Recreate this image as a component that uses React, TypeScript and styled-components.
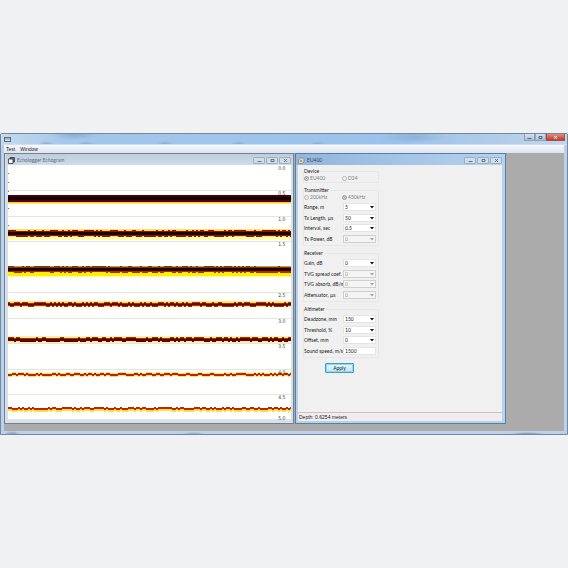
import React, { useId, useState } from 'react';
import styled, { createGlobalStyle, css } from 'styled-components';

const GlobalStyle = createGlobalStyle`
  * { box-sizing: border-box; }
  body { margin: 0; background: #eff1f2; }
  button, input, select { font: inherit; color: inherit; margin: 0; }
`;

const Page = styled.div`
  min-height: 100vh;
  display: flex;
  flex-direction: column;
  justify-content: center;
  font-family: Lato, 'Liberation Sans', Arial, sans-serif;
  font-size: 5px;
  line-height: 8px;
  color: #222;
`;

const AppWindow = styled.main`
  display: flex;
  flex-direction: column;
  border: 1px solid #75889a;
  border-radius: 2px 2px 0 0;
  padding: 0 3px 3px;
  background:
    radial-gradient(ellipse 8px 3px at 2% 100%, #7f9cb8 0, transparent 100%),
    radial-gradient(ellipse 12px 2px at 34% 100%, #8ba6c0 0, transparent 100%),
    radial-gradient(ellipse 18px 2px at 93% 100%, #7c94aa 0, transparent 100%),
    linear-gradient(#b9d1ea, #b9d1ea);
`;

const TitleBar = styled.header`
  display: flex;
  align-items: flex-start;
  justify-content: space-between;
  height: 11px;
  margin: 0 -3px;
  padding-left: 3px;
  border-bottom: 1px solid #cfdeee;
  background:
    radial-gradient(ellipse 24px 5px at 13% 10%, #8baed3 0, transparent 100%),
    radial-gradient(ellipse 8px 3px at 8% 100%, #8baacb 0, transparent 100%),
    radial-gradient(ellipse 8px 3px at 15% 100%, #8baacb 0, transparent 100%),
    radial-gradient(ellipse 8px 3px at 29% 100%, #8baacb 0, transparent 100%),
    radial-gradient(ellipse 8px 3px at 42% 100%, #8baacb 0, transparent 100%),
    radial-gradient(ellipse 8px 3px at 56% 100%, #8baacb 0, transparent 100%),
    radial-gradient(ellipse 34px 6px at 73% 30%, #8db1d8 0, transparent 100%),
    linear-gradient(90deg, #c5daef 0, #a3c6ea 12%, #9cc2eb 70%, #b4cee9 90%, #c2d6ea 100%);
`;

const AppIcon = styled.svg`
  width: 7px;
  height: 6px;
  margin-top: 2px;
`;

const Buttons = styled.div`
  display: flex;
  padding-right: 2px;
`;

const CaptionButton = styled.button<{ $close?: boolean }>`
  display: grid;
  place-items: center;
  width: ${p => (p.$close ? 19 : 11)}px;
  height: 7px;
  padding: 0;
  border: 1px solid ${p => (p.$close ? '#a45050' : '#8da3ba')};
  border-top: 0;
  color: ${p => (p.$close ? '#fff' : '#56687b')};
  background: ${p => (p.$close ? 'linear-gradient(#df9080, #c43a28)' : 'linear-gradient(#d6e2ee, #a9bdd2)')};
`;

const Glyph = styled.svg`
  width: 5px;
  height: 5px;
  fill: none;
  stroke: currentColor;
  stroke-width: 1;
`;

const MenuBar = styled.nav`
  display: flex;
  gap: 5px;
  height: 8px;
  padding-left: 2px;
  font-family: 'Liberation Sans', Arial, sans-serif;
  background: linear-gradient(#f7f9fd, #dde4f1);
`;

const MenuItem = styled.button`
  padding: 0;
  border: 0;
  background: none;
  line-height: 8px;
`;

const Workspace = styled.div`
  display: grid;
  grid-template-columns: 290fr 211fr 57fr;
  column-gap: 1px;
  align-items: stretch;
  padding-bottom: 7px;
  background: #ababab;
`;

const Child = styled.section<{ $active?: boolean }>`
  display: flex;
  flex-direction: column;
  min-width: 0;
  border: 1px solid ${p => (p.$active ? '#56809f' : '#77818d')};
  padding: ${p => (p.$active ? '0 3px 2px 2px' : '0 2px 3px 3px')};
  background: ${p => (p.$active ? '#b6d2ee' : '#d5e0ee')};
`;

const ChildTitle = styled.header<{ $active?: boolean }>`
  display: flex;
  align-items: center;
  gap: 2px;
  height: 11px;
  flex: none;
  margin: 0 -2px;
  padding: 1px 2px 0 2px;
  color: ${p => (p.$active ? '#344a60' : '#5d6a78')};
  background: ${p =>
    p.$active
      ? 'linear-gradient(90deg, #93b5dc, #a4c4e6 50%, #b5d1ed)'
      : 'linear-gradient(#bccddd, #cfdcea)'};
`;

const ChildName = styled.h2`
  flex: 1;
  margin: 0;
  font-size: 5px;
  font-weight: 400;
`;

const ChildIcon = styled.svg`
  width: 7px;
  height: 7px;
`;

const ChildButtons = styled.div`
  display: flex;
  gap: 1px;
`;

const ChildButton = styled.button`
  display: grid;
  place-items: center;
  width: 12px;
  height: 7px;
  padding: 0;
  border: 1px solid #9eafc1;
  border-radius: 1px;
  color: #61758a;
  background: #d0deec;
`;

const Chart = styled.svg`
  display: block;
  width: 100%;
  height: 255px;
  background: #fffffe;
`;

const AxisText = styled.text`
  font-family: 'DejaVu Sans Condensed', 'DejaVu Sans', sans-serif;
  font-size: 5px;
  fill: #444;
  text-anchor: end;
`;

const Panel = styled.form`
  flex: 1;
  display: flex;
  flex-direction: column;
  background: #f0f0f0;
`;

const Groups = styled.div`
  flex: 1;
  display: flex;
  flex-direction: column;
  gap: 3px;
  padding: 2px 0 0 5px;
`;

const Group = styled.fieldset`
  margin: 0;
  padding: 0;
  min-width: 0;
  width: 76px;
  border: 1px solid #e7e7e7;
`;

const Legend = styled.legend`
  margin: 0;
  padding: 0 1px 0 0;
  height: 8px;
  background: #f0f0f0;
`;

const Radios = styled.div`
  display: grid;
  grid-template-columns: 1fr 1fr;
  column-gap: 2px;
  height: 7px;
  line-height: 7px;
`;

const RadioLabel = styled.label`
  display: flex;
  align-items: center;
  gap: 1px;
  color: #808080;
`;

const Radio = styled.input`
  appearance: none;
  width: 5px;
  height: 5px;
  border: 1px solid #b9b9b9;
  border-radius: 50%;
  background: #f4f4f4;
  &:checked {
    border-color: #a5a5a5;
    background: #8d8d8d;
    box-shadow: inset 0 0 0 1px #d8d8d8;
  }
`;

const Rows = styled.div`
  display: grid;
  grid-auto-rows: 1fr;
  height: 44px;
  padding: 1px 0;
`;

const Row = styled.div`
  display: grid;
  grid-template-columns: minmax(0, 1fr) 33px;
  align-items: center;
  padding-right: 2px;
`;

const RowLabel = styled.label`
  white-space: nowrap;
`;

const Field = styled.div`
  position: relative;
  height: 8px;
`;

const control = css`
  display: block;
  width: 100%;
  height: 8px;
  padding: 0 1px;
  border: 1px solid #e4e4e4;
  border-radius: 0;
  background: #fff;
  line-height: 6px;
  outline: 0;
  &:disabled {
    opacity: 1;
    color: #999;
    border-color: #cfcfcf;
    background: #f4f4f4;
  }
`;

const Select = styled.select`
  ${control}
  appearance: none;
`;

const TextInput = styled.input`
  ${control}
`;

const Arrow = styled.svg<{ $dim?: boolean }>`
  position: absolute;
  right: 2px;
  top: 3px;
  width: 4px;
  height: 3px;
  fill: ${p => (p.$dim ? '#a0a0a0' : '#111')};
  pointer-events: none;
`;

const Apply = styled.button`
  align-self: flex-start;
  width: 29px;
  height: 10px;
  margin: 2px 0 0 22px;
  padding: 0;
  border: 1px solid #3f9fc4;
  border-radius: 1px;
  box-shadow: inset 0 0 0 1px #8adcf6;
  background: linear-gradient(#eaf6fb, #c4e3f0);
  line-height: 8px;
`;

const Status = styled.footer`
  height: 9px;
  flex: none;
  padding-left: 1px;
  border-top: 1px solid #c3c3c3;
  background: #f1eded;
  font-family: 'Liberation Sans', Arial, sans-serif;
`;

/* ---- echogram ---- */

const WIDTH = 283;
const STEP = 2;

// Repeatable ping-to-ping wobble, either 0 or 1.
const wobble = (i: number, seed: number) => {
  const v = Math.sin(i * 12.9898 + seed * 78.233) * 43758.5453;
  return v - Math.floor(v) > 0.5 ? 1 : 0;
};

type Layer = { y: number; h: number; color: string; jitter?: number };
type Echo = { layers: Layer[] };

const echoes: Echo[] = [
  { layers: [
    { y: 30, h: 2, color: '#480006' },
    { y: 32, h: 3, color: '#0b0000' },
    { y: 35, h: 2, color: '#5d0009' },
    { y: 37, h: 1, color: '#ffc83c' },
    { y: 38, h: 1, color: '#fff05a' },
  ] },
  { layers: [
    { y: 64, h: 8, color: '#ffdf65' },
    { y: 65, h: 6, color: '#8e1500', jitter: 1 },
    { y: 67, h: 3, color: '#180000' },
    { y: 72, h: 3, color: '#ffffb4' },
  ] },
  { layers: [
    { y: 101, h: 2, color: '#c99b50' },
    { y: 101, h: 2, color: '#7a3b0c', jitter: 1 },
    { y: 103, h: 3, color: '#150000' },
    { y: 107, h: 4, color: '#ffef00' },
    { y: 111, h: 1, color: '#ffff8c' },
    { y: 105, h: 2, color: '#bd2500', jitter: 1 },
    { y: 104, h: 2, color: '#220000' },
  ] },
  { layers: [
    { y: 136, h: 6, color: '#ffe878' },
    { y: 137, h: 4, color: '#b13000', jitter: 1 },
    { y: 138, h: 2, color: '#6d0600', jitter: 1 },
  ] },
  { layers: [
    { y: 171, h: 7, color: '#fff0a0' },
    { y: 172, h: 4, color: '#a33500', jitter: 1 },
    { y: 173, h: 3, color: '#650000', jitter: 1 },
  ] },
  { layers: [
    { y: 207, h: 4, color: '#ffdc6a', jitter: 1 },
    { y: 208, h: 2, color: '#bb2600', jitter: 1 },
  ] },
  { layers: [
    { y: 242, h: 4, color: '#ffe03c', jitter: 1 },
    { y: 242, h: 2, color: '#bb2600', jitter: 1 },
  ] },
];

const layerPath = ({ y, h, jitter }: Layer, seed: number) => {
  if (!jitter) return `M0 ${y}H${WIDTH}V${y + h}H0Z`;
  let d = '';
  for (let x = 0; x < WIDTH; x += STEP) {
    const top = y + wobble(x / STEP, seed) * jitter;
    d += `M${x} ${top}h${STEP}v${h}h-${STEP}Z`;
  }
  return d;
};

const axis = [
  ['0.0', 5], ['0.5', 30], ['1.0', 56], ['1.5', 81], ['2.5', 132],
  ['3.0', 158], ['3.5', 183], ['4.0', 209], ['4.5', 234], ['5.0', 255],
] as const;
const grid = [25, 51, 76, 127, 153, 178, 204, 229, 254];

const Echogram = () => (
  <Chart role="img" aria-label="Echogram, depth 0 to 5 meters">
    <svg width="100%" height="100%" viewBox={`0 0 ${WIDTH} 255`} preserveAspectRatio="none" shapeRendering="crispEdges">
      {grid.map(y => <rect key={y} x="0" y={y} width={WIDTH} height="1" fill="#dfeadd" />)}
      {[8, 17, 26, 43, 60].map(y => <rect key={y} x="0" y={y} width="1" height="1" fill="#777" />)}
      {echoes.map((e, i) => e.layers.map((l, j) => (
        <path key={`${i}-${j}`} d={layerPath(l, i + 1)} fill={l.color} />
      )))}
    </svg>
    {axis.map(([t, y]) => <AxisText key={t} x="98%" y={y}>{t}</AxisText>)}
  </Chart>
);

/* ---- window parts ---- */

const MinGlyph = () => <Glyph viewBox="0 0 5 5"><path d="M0.5 3.5h4" /></Glyph>;
const MaxGlyph = () => <Glyph viewBox="0 0 5 5"><path d="M1 1.5h3v2h-3z" /></Glyph>;
const CloseGlyph = () => <Glyph viewBox="0 0 5 5"><path d="M1 1l3 3M4 1l-3 3" /></Glyph>;

const ChildFrame = ({ title, active, children }: { title: string; active?: boolean; children: React.ReactNode }) => (
  <Child $active={active} aria-label={title}>
    <ChildTitle $active={active}>
      <ChildIcon viewBox="0 0 7 7">
        {active ? (
          <>
            <path d="M0.5 3l2-2H6v4L4 6.5H0.5z" fill="#d9d5c7" stroke="#77828b" strokeWidth="0.7" />
            <path d="M2 3h2v2H2z" fill="#b49a63" />
          </>
        ) : (
          <>
            <path d="M2 .5h4.5V5H2z" fill="#596571" stroke="#333" strokeWidth="0.7" />
            <path d="M.5 2H5v4.5H.5z" fill="#f5f7f8" stroke="#333" strokeWidth="0.8" />
          </>
        )}
      </ChildIcon>
      <ChildName>{title}</ChildName>
      <ChildButtons>
        <ChildButton type="button" aria-label="Minimize"><MinGlyph /></ChildButton>
        <ChildButton type="button" aria-label="Maximize"><MaxGlyph /></ChildButton>
        <ChildButton type="button" aria-label="Close"><CloseGlyph /></ChildButton>
      </ChildButtons>
    </ChildTitle>
    {children}
  </Child>
);

const SelectRow = ({ label, value, disabled }: { label: string; value: string; disabled?: boolean }) => {
  const id = useId();
  return (
    <Row>
      <RowLabel htmlFor={id}>{label}</RowLabel>
      <Field>
        <Select id={id} defaultValue={value} disabled={disabled}>
          <option>{value}</option>
        </Select>
        <Arrow $dim={disabled} viewBox="0 0 4 3"><path d="M0 0h4L2 2.5z" /></Arrow>
      </Field>
    </Row>
  );
};

const TextRow = ({ label, value }: { label: string; value: string }) => {
  const id = useId();
  const [text, setText] = useState(value);
  return (
    <Row>
      <RowLabel htmlFor={id}>{label}</RowLabel>
      <Field><TextInput id={id} value={text} onChange={e => setText(e.target.value)} /></Field>
    </Row>
  );
};

const RadioPair = ({ name, options, selected }: { name: string; options: string[]; selected: string }) => (
  <Radios>
    {options.map(o => (
      <RadioLabel key={o}>
        <Radio type="radio" name={name} value={o} defaultChecked={o === selected} disabled />
        {o}
      </RadioLabel>
    ))}
  </Radios>
);

export default function App() {
  return (
    <>
      <GlobalStyle />
      <Page>
        <AppWindow>
          <TitleBar>
            <AppIcon viewBox="0 0 7 6">
              <rect x=".5" y="1.5" width="6" height="4" fill="#dce4e9" stroke="#586a78" />
              <path d="M1 3h5" stroke="#7f909c" />
            </AppIcon>
            <Buttons>
              <CaptionButton type="button" aria-label="Minimize"><MinGlyph /></CaptionButton>
              <CaptionButton type="button" aria-label="Maximize"><MaxGlyph /></CaptionButton>
              <CaptionButton type="button" aria-label="Close" $close><CloseGlyph /></CaptionButton>
            </Buttons>
          </TitleBar>
          <MenuBar>
            <MenuItem type="button">Test</MenuItem>
            <MenuItem type="button">Window</MenuItem>
          </MenuBar>
          <Workspace>
            <ChildFrame title="Echologger Echogram"><Echogram /></ChildFrame>
            <ChildFrame title="EU400" active>
              <Panel onSubmit={e => e.preventDefault()}>
                <Groups>
                  <Group>
                    <Legend>Device</Legend>
                    <RadioPair name="device" options={['EU400', 'D24']} selected="EU400" />
                  </Group>
                  <Group>
                    <Legend>Transmitter</Legend>
                    <RadioPair name="frequency" options={['200kHz', '450kHz']} selected="450kHz" />
                    <Rows>
                      <SelectRow label="Range, m" value="5" />
                      <SelectRow label="Tx Length, µs" value="50" />
                      <SelectRow label="Interval, sec" value="0.5" />
                      <SelectRow label="Tx Power, dB" value="0" disabled />
                    </Rows>
                  </Group>
                  <Group>
                    <Legend>Receiver</Legend>
                    <Rows>
                      <SelectRow label="Gain, dB" value="0" />
                      <SelectRow label="TVG spread coef." value="0" disabled />
                      <SelectRow label="TVG absorb, dB/m" value="0" disabled />
                      <SelectRow label="Attenuator, µs" value="0" disabled />
                    </Rows>
                  </Group>
                  <Group>
                    <Legend>Altimeter</Legend>
                    <Rows>
                      <SelectRow label="Deadzone, mm" value="150" />
                      <SelectRow label="Threshold, %" value="10" />
                      <SelectRow label="Offset, mm" value="0" />
                      <TextRow label="Sound speed, m/s" value="1500" />
                    </Rows>
                  </Group>
                  <Apply type="submit">Apply</Apply>
                </Groups>
                <Status>Depth: 0.6254 meters</Status>
              </Panel>
            </ChildFrame>
          </Workspace>
        </AppWindow>
      </Page>
    </>
  );
}
